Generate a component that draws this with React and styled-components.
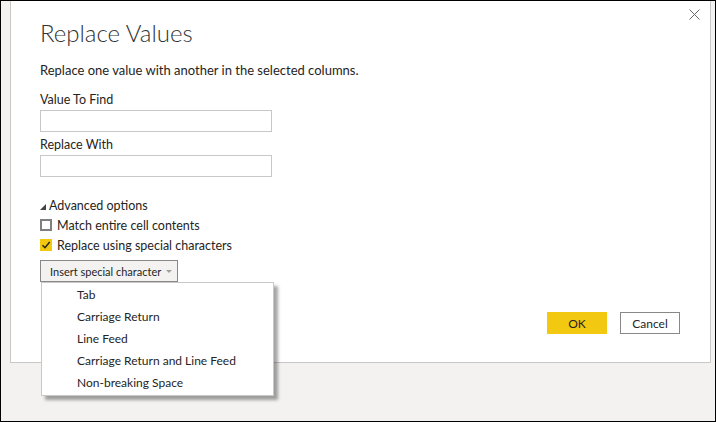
import React from "react";
import styled, { createGlobalStyle } from "styled-components";

const GlobalStyle = createGlobalStyle`
  html, body {
    margin: 0;
    padding: 0;
    background: #ffffff;
  }
  * {
    box-sizing: border-box;
  }
`;

const specialChars = [
  "Tab",
  "Carriage Return",
  "Line Feed",
  "Carriage Return and Line Feed",
  "Non-breaking Space",
];

const CheckIcon = () => (
  <svg width="10" height="10" viewBox="0 0 10 10">
    <path d="M1.5 5.2 L4 7.7 L8.7 2" fill="none" stroke="#252423" strokeWidth="1.5" />
  </svg>
);

const App = () => (
  <>
    <GlobalStyle />
    <Frame>
      <Dialog>
        <CloseButton aria-label="Close">
          <svg width="11" height="11" viewBox="0 0 11 11">
            <path d="M0.5 0.5 L10.5 10.5 M10.5 0.5 L0.5 10.5" stroke="#666" strokeWidth="1" />
          </svg>
        </CloseButton>
        <Title>Replace Values</Title>
        <Subtitle>Replace one value with another in the selected columns.</Subtitle>

        <Fields>
          <Field>
            <Label>Value To Find</Label>
            <TextInput />
          </Field>
          <Field>
            <Label>Replace With</Label>
            <TextInput />
          </Field>
        </Fields>

        <Advanced>
          <Expander />
          Advanced options
        </Advanced>
        <CheckRow>
          <CheckBox />
          Match entire cell contents
        </CheckRow>
        <CheckRow>
          <CheckBox $checked>
            <CheckIcon />
          </CheckBox>
          Replace using special characters
        </CheckRow>

        <MenuAnchor>
          <InsertButton>
            Insert special character
            <Caret />
          </InsertButton>
          <Menu>
            {specialChars.map((item) => (
              <MenuItem key={item}>{item}</MenuItem>
            ))}
          </Menu>
        </MenuAnchor>

        <Footer>
          <ActionButton $primary>OK</ActionButton>
          <ActionButton>Cancel</ActionButton>
        </Footer>
      </Dialog>
    </Frame>
  </>
);

export default App;

// Styled Components
const Frame = styled.div`
  width: 716px;
  height: 422px;
  border: 1px solid #000;
  background: #f3f2f1;
  padding-left: 9px;
  overflow: hidden;
  font-family: "Lato", "Open Sans", sans-serif;
  color: #252423;
`;

const Dialog = styled.div`
  position: relative;
  width: 701px;
  height: 362px;
  background: #ffffff;
  border: 1px solid #c8c8c8;
  border-top: none;
  padding: 0 30px 0 29px;
  display: flex;
  flex-direction: column;
  align-items: flex-start;
`;

const CloseButton = styled.button`
  position: absolute;
  top: 8px;
  right: 10px;
  padding: 0;
  border: none;
  background: none;
  display: flex;
  cursor: pointer;
`;

const Title = styled.h1`
  margin: 16px 0 0;
  font-size: 24px;
  line-height: 32px;
  font-weight: 300;
  color: #333;
`;

const Subtitle = styled.p`
  margin: 11px 0 0;
  font-size: 13px;
  line-height: 20px;
`;

const Fields = styled.div`
  margin-top: 11px;
  display: flex;
  flex-direction: column;
  gap: 4px;
`;

const Field = styled.div`
  display: flex;
  flex-direction: column;
`;

const Label = styled.label`
  font-size: 12.5px;
  line-height: 18px;
  margin-bottom: 1px;
`;

const TextInput = styled.input`
  width: 232px;
  height: 22px;
  border: 1px solid #c8c8c8;
  background: #fff;
  outline: none;
`;

const Advanced = styled.div`
  margin-top: 20px;
  display: flex;
  align-items: center;
  gap: 3px;
  font-size: 12.5px;
  line-height: 18px;
`;

const Expander = styled.span`
  width: 0;
  height: 0;
  border-left: 6px solid transparent;
  border-bottom: 6px solid #444;
  margin-top: 1px;
`;

const CheckRow = styled.label`
  display: flex;
  align-items: center;
  gap: 5px;
  height: 20px;
  font-size: 12.5px;
`;

const CheckBox = styled.span`
  width: 12px;
  height: 12px;
  display: flex;
  align-items: center;
  justify-content: center;
  background: ${(p) => (p.$checked ? "#f2c811" : "#fff")};
  border: ${(p) => (p.$checked ? "none" : "2px solid #7f7f7f")};
`;

const MenuAnchor = styled.div`
  position: relative;
  margin-top: 5px;
`;

const InsertButton = styled.button`
  display: flex;
  align-items: center;
  width: 138px;
  height: 22px;
  padding: 0 0 0 9px;
  border: 1px solid #8a8886;
  background: #f3f2f1;
  font-family: inherit;
  font-size: 11px;
  color: #252423;
  white-space: nowrap;
`;

const Caret = styled.span`
  margin-left: 5px;
  width: 0;
  height: 0;
  border-left: 3px solid transparent;
  border-right: 3px solid transparent;
  border-top: 3px solid #a19f9d;
`;

const Menu = styled.ul`
  position: absolute;
  top: 100%;
  left: 1px;
  width: 233px;
  height: 114px;
  margin: 0;
  padding: 1px 0 0;
  list-style: none;
  background: #fff;
  border: 1px solid #c8c8c8;
  box-shadow: 4px 4px 3px rgba(0, 0, 0, 0.35);
  z-index: 2;
`;

const MenuItem = styled.li`
  height: 22px;
  line-height: 22px;
  padding-left: 35px;
  font-size: 12px;
`;

const Footer = styled.div`
  align-self: flex-end;
  margin-top: 30px;
  display: flex;
  gap: 13px;
`;

const ActionButton = styled.button`
  width: 60px;
  height: 22px;
  padding: 0;
  font-family: inherit;
  font-size: 12px;
  color: #252423;
  background: ${(p) => (p.$primary ? "#f2c811" : "#fff")};
  border: ${(p) => (p.$primary ? "none" : "1px solid #8a8886")};
`;
